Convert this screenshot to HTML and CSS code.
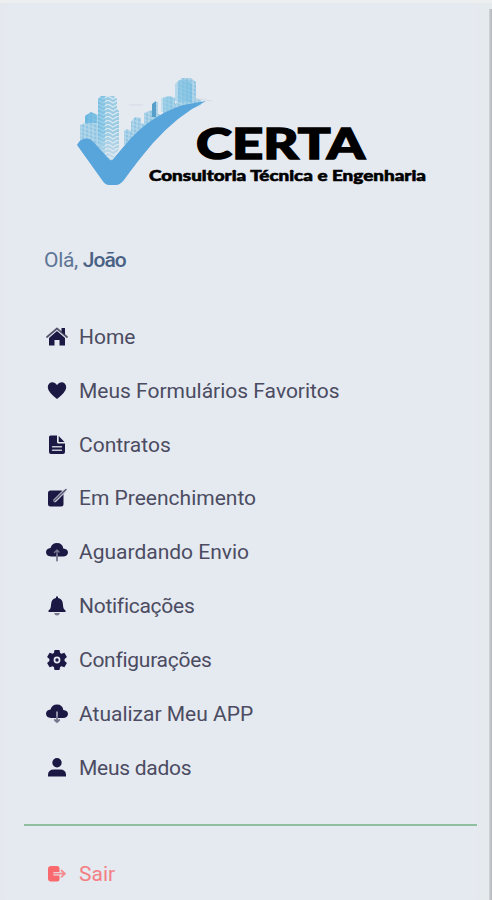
FILE: index.html
```html
<!DOCTYPE html>
<html lang="pt-BR">
<head>
<meta charset="utf-8">
<title>CERTA</title>
<link rel="stylesheet" href="styles.css">
</head>
<body>
<aside class="drawer">
  <svg class="logo" viewBox="70 70 360 125" role="img" aria-label="CERTA">
    <defs>
      <pattern id="windows" width="4" height="4" patternUnits="userSpaceOnUse" patternTransform="skewY(18)">
        <rect width="4" height="4" fill="#8fc4e2"/>
        <path d="M0 1h4M1 0v4" stroke="#bddcec" stroke-width="1"/>
      </pattern>
      <pattern id="waves" x="98" width="10" height="4" patternUnits="userSpaceOnUse">
        <rect width="10" height="4" fill="#9bcae3"/>
        <path d="M0 0l5 3 5-3" fill="none" stroke="#d8eaf2" stroke-width="1.3"/>
      </pattern>
      <linearGradient id="tower" x1="0" x2="1"><stop offset="0" stop-color="#4caadd" stop-opacity=".65"/><stop offset=".5" stop-color="#a9dcec" stop-opacity=".25"/><stop offset="1" stop-color="#68b7df" stop-opacity=".55"/></linearGradient>
      <linearGradient id="fade" x1="0" y1="0" x2="0" y2="1"><stop offset=".55" stop-color="#e5e9f0" stop-opacity="0"/><stop offset="1" stop-color="#e5e9f0" stop-opacity=".6"/></linearGradient>
    </defs>
    <g>
      <path fill="url(#windows)" d="M80 148v-23l5-2v-7l6-4 7 3v37l-8-4z"/>
      <path fill="url(#windows)" d="M124 145v-14l3-2 4 2v-9l4-5 6 1v5l3 1v-11l8-3 3-8h3v12l5 2v-18l7-2 5 2v6l3-3v-19l4-4h9l5 4v17l5 1v5l-32 14z"/>
      <path fill="url(#waves)" d="M98 152V99l3-3h13l3 3v10l2 2v38l-8 12z"/>
      <path fill="url(#tower)" d="M98 152V99l3-3h4v60zM85 123v-7l6-4 6 3v8zM161 98l7-2 5 2v14h-12zM175 101V84l4-4h9l4 4v19z"/>
      <path fill="url(#fade)" d="M98 96h21v53l-8 12-13-9z"/>
      <path d="M152 104l4-3v16h-4z" fill="#579fc8"/>
      <path d="M129 105h14M194 98l18 3" stroke="#cbd9e2" stroke-width=".7"/>
    </g>
    <path fill="#58a5dc" d="M77 145Q81 137 90 139Q95 143 98 147L110 160Q112 161 114 158L125 145Q149 116 183 105L206 101Q178 115 153 143Q136 163 124 180Q120 185 116 185H109Q105 185 102 180Z"/>
    <text class="brand" x="196" y="158.5" textLength="169" lengthAdjust="spacingAndGlyphs">CERTA</text>
    <text class="tagline" x="149" y="181" textLength="277" lengthAdjust="spacingAndGlyphs">Consultoria Técnica e Engenharia</text>
  </svg>

  <p class="greeting">Olá, <span class="name">João</span></p>

  <nav class="menu">
    <a class="item"><svg class="icon" viewBox="0 0 22 22"><path d="M3 12l8-7 8 7v7.500h-5.500V14h-5v5.500H3z"/><path class="roof" d="M1 11L11 2.500l10 8.500"/><path d="M15.500 2H19v7l-3.500-3z"/></svg><span>Home</span></a>
    <a class="item"><svg class="icon" viewBox="0 0 22 22"><path d="M11 19Q2 12 1.800 7.500Q1.800 3 6 2.300Q9 2 11 5Q13 2 16 2.300Q20.200 3 20.200 7.500Q20 12 11 19z"/></svg><span>Meus Formulários Favoritos</span></a>
    <a class="item"><svg class="icon" viewBox="0 0 22 22"><path d="M4.500 1.500H11V8q0 1.500 1.500 1.500H19V18q0 2-2 2H5q-2 0-2-2V3q0-1.500 1.500-1.500z"/><path d="M12.700 2L18.500 8h-5.800z"/><path class="cut" d="M6.500 12.800h9M6.500 16.200h9"/></svg><span>Contratos</span></a>
    <a class="item"><svg class="icon" viewBox="0 0 22 22"><rect x="2" y="3.500" width="15.500" height="16" rx="2.500"/><path class="cut wide" d="M9 13.500l9-9"/><path class="pen" d="M8.300 13.700L20 2.500"/></svg><span>Em Preenchimento</span></a>
    <a class="item"><svg class="icon" viewBox="0 0 22 22"><path d="M5 15.500Q0 15 0 11Q.3 7.500 4.500 7Q6 2 11 2Q16.500 2 17.300 7.500Q22 8 22 11.800Q21.500 15.500 17 15.500z"/><path class="cut soft" d="M11 15V9.500M8.500 11.500l2.500-2.500 2 2"/><path class="stem" d="M11 14v5.500"/></svg><span>Aguardando Envio</span></a>
    <a class="item tight"><svg class="icon" viewBox="0 0 22 22"><path d="M10 3V1.500h2V3q5 1 5 7 0 4 2.500 5.500V17h-17v-1.500Q5 14 5 10q0-6 5-7z"/><path class="clapper" d="M8 18h6q-1 2.500-3 2.500T8 18z"/></svg><span>Notificações</span></a>
    <a class="item tight"><svg class="icon" viewBox="0 0 22 22"><path fill-rule="evenodd" d="M8.500 1h5l.6 3 1.400.8 2.900-1 2.500 4.300L18.600 10v2l2.300 1.900-2.500 4.300-2.900-1-1.400.8-.6 3h-5l-.6-3-1.400-.8-2.900 1-2.500-4.300L3.400 12v-2L1.100 8.100l2.500-4.300 2.900 1L7.900 4zM11 7.600a3.400 3.400 0 1 0 0 6.800 3.400 3.400 0 0 0 0-6.800z"/><circle cx="11" cy="11" r="1.700"/></svg><span>Configurações</span></a>
    <a class="item"><svg class="icon" viewBox="0 0 22 22"><path d="M5 15Q0 14.500 0 10.500Q.3 7 4.500 6.500Q6 1.500 11 1.500Q16.500 1.500 17.300 7Q22 7.500 22 11.300Q21.500 15 17 15z"/><path class="cut" d="M11 9v6"/><path class="stem" d="M11 14v5M8.800 17l2.200 2.200 2.200-2.200"/></svg><span>Atualizar Meu APP</span></a>
    <a class="item tight"><svg class="icon" viewBox="0 0 22 22"><circle cx="11" cy="5.800" r="4.700"/><path d="M2 19.500V18q0-5.500 6-5.500h6q6 0 6 5.500v1.500z"/></svg><span>Meus dados</span></a>
  </nav>

  <hr class="divider">

  <a class="item exit"><svg class="icon" viewBox="0 0 22 22"><path d="M5 3h6q2.500 0 2.500 2.500V9H7.500v3.500h6V16q0 2.500-2.500 2.500H5Q2 18.500 2 15.500V6q0-3 3-3z"/><path class="arrow" d="M8 10.700h11M15.500 7.500l3.500 3.200-3.500 3.200"/></svg><span>Sair</span></a>
</aside>
</body>
</html>
```
FILE: styles.css
```css
* { box-sizing: border-box; }
body {
  margin: 0;
  height: 900px;
  overflow: hidden;
  background: #e5e9f0;
  font-family: Roboto, "Noto Sans", sans-serif;
}
.drawer {
  position: relative;
  height: 900px;
  padding: 67px 15px 0 24px;
  border-top: 3px solid #eceeef;
  background: linear-gradient(90deg, #e5e9ee 0, #e5e9f0 8px, #e5e9f0 476px, #e5eaed 482px);
}
.drawer::after {
  content: "";
  position: absolute;
  top: 6px;
  right: 0;
  bottom: 0;
  width: 3px;
  background: linear-gradient(90deg, #d1d4d8, #b2b4b9);
}
.logo {
  display: block;
  width: 360px;
  height: 125px;
  margin-left: 46px;
}
.brand { font: 900 42px Lato, sans-serif; stroke: #000; stroke-width: 1.4px; }
.tagline { font: 900 15.5px Lato, sans-serif; stroke: #000; stroke-width: .6px; }
.greeting {
  height: 30px;
  margin: 50px 0 0 20px;
  font-size: 21px;
  line-height: 31px;
  letter-spacing: -.3px;
  color: #5d7595;
}
.name { font-weight: 500; letter-spacing: -1px; color: #486184; }
.menu {
  display: grid;
  grid-auto-rows: 53.85px;
  margin-top: 35px;
}
.item {
  display: flex;
  align-items: center;
  gap: 11px;
  padding-left: 22px;
  font-size: 21px;
  color: #4b4c62;
}
.tight { letter-spacing: -.27px; }
.icon {
  flex: none;
  width: 22px;
  height: 22px;
  fill: #1b1944;
}
.icon path { stroke-linecap: round; stroke-linejoin: round; }
.icon .roof { fill: none; stroke: #55536b; stroke-width: 1.7; }
.icon .cut { fill: none; stroke: #c4c6d3; stroke-width: 1.4; }
.icon .soft { stroke: #77778d; }
.icon .wide { stroke-width: 3.4; }
.icon .pen { stroke: #555672; stroke-width: 1.5; }
.icon .stem { fill: none; stroke: #77778d; stroke-width: 1.8; }
.icon .clapper { fill: #77778d; }
.divider {
  height: 2px;
  margin: 29px 0 0;
  border: 0;
  background: #8ebf9f;
}
.exit { height: 54px; margin-top: 21px; color: #f47e83; }
.exit .icon { fill: #fa696d; }
.icon .arrow { fill: none; stroke: #f58b8f; stroke-width: 1.7; }
```
